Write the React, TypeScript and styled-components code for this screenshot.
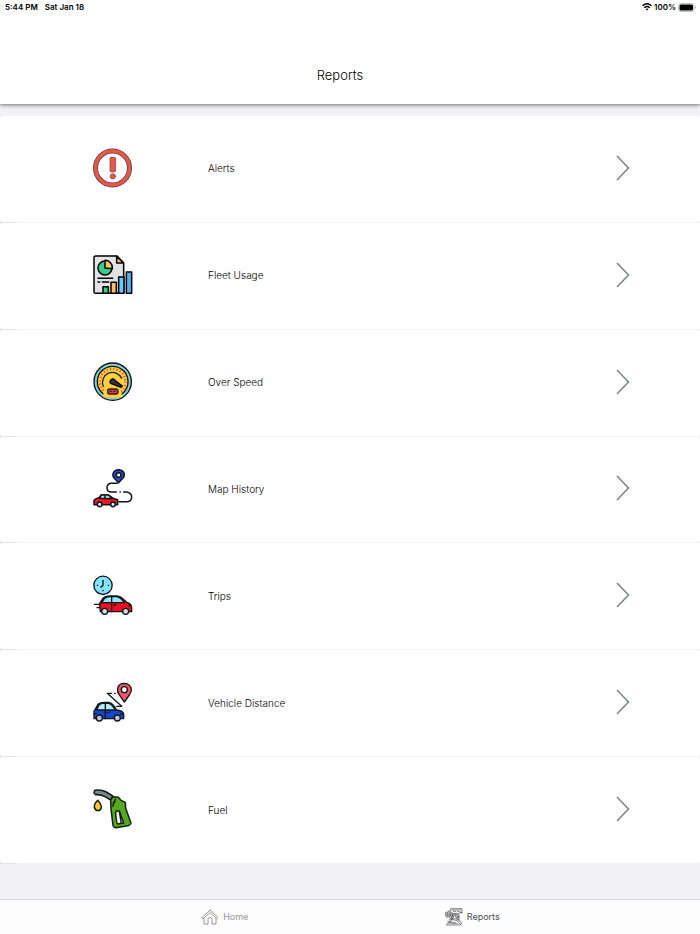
import React from "react";
import styled, { createGlobalStyle } from "styled-components";

const GlobalStyle = createGlobalStyle`
  * { box-sizing: border-box; }
  body {
    margin: 0;
    background: #f1f1f6;
    color: #000;
    font-family: Inter, "Liberation Sans", sans-serif;
  }
`;

const Page = styled.div`
  display: flex;
  flex-direction: column;
  min-height: 100vh;
`;

const Header = styled.header`
  background: #fff;
  box-shadow: 0 1px 4px rgba(0, 0, 0, 0.55);
  padding-bottom: 20px;
`;

const StatusBar = styled.div`
  display: flex;
  align-items: center;
  justify-content: space-between;
  height: 14px;
  padding: 0 4px 0 5px;
  color: #000;
  font-size: 8px;
  line-height: 14px;
  font-weight: 600;
`;

const StatusGroup = styled.div<{ $gap: number }>`
  display: flex;
  align-items: center;
  gap: ${(p) => p.$gap}px;
`;

const Title = styled.h1`
  margin: 52px 0 0;
  padding-right: 20px;
  text-align: center;
  font-size: 13px;
  line-height: 18px;
  font-weight: 300;
`;

const ReportList = styled.ul`
  flex: 1;
  display: grid;
  grid-auto-rows: 1fr;
  margin: 12px 0 35px;
  padding: 0;
  list-style: none;
  background: linear-gradient(to right, #e6e6e9 17px, #f3f3f5 17px);
`;

const ReportItem = styled.li`
  display: flex;
  min-height: 72px;
  padding-bottom: 1px;
`;

const ReportButton = styled.button`
  flex: 1;
  display: flex;
  align-items: center;
  border: 0;
  border-radius: 3px;
  background: #fff;
  padding: 0 70px 2px 93px;
  color: inherit;
  font: inherit;
  font-size: 10px;
  line-height: 16px;
  text-align: left;
  cursor: pointer;
`;

const ReportIcon = styled.svg`
  width: 40px;
  height: 40px;
  flex: none;
  stroke-linecap: round;
  stroke-linejoin: round;
`;

const ReportLabel = styled.span`
  flex: 1;
  padding: 1px 0 0 75px;
  font-weight: 300;
`;

const Chevron = styled.svg`
  width: 14px;
  height: 26px;
  flex: none;
`;

const TabBar = styled.nav`
  display: grid;
  grid-template-columns: 1fr 1fr;
  justify-items: center;
  height: 35px;
  padding: 0 104px 0 101px;
  border-top: 1px solid #d9d9de;
  background: #fdfdfd;
`;

const Tab = styled.a<{ $active?: boolean }>`
  display: flex;
  align-items: center;
  gap: 4px;
  color: ${(p) => (p.$active ? "#4c4c50" : "#96969a")};
  font-size: 9px;
  line-height: 12px;
  text-decoration: none;
`;

const TabIcon = styled.svg`
  width: 18px;
  height: 18px;
  fill: none;
  stroke: currentColor;
  stroke-linecap: round;
  stroke-linejoin: round;
`;

const AlertIcon = () => (
  <>
    <circle cx="82.500" cy="84" r="51" fill="#fff" stroke="#5c4543" strokeWidth="15" />
    <circle cx="82.500" cy="84" r="51" fill="none" stroke="#e9544b" strokeWidth="10" />
    <rect x="75" y="52" width="17" height="44" rx="4" fill="#e9544b" stroke="#6b4542" strokeWidth="2" />
    <circle cx="83.500" cy="109" r="8" fill="#e9544b" stroke="#6b4542" strokeWidth="2" />
  </>
);

const UsageIcon = () => (
  <g stroke="#000" strokeWidth="4.500">
    <path d="M32 27H96L116 47V139H32Q27 139 27 134V32Q27 27 32 27Z" fill="#e3e2e5" />
    <path d="M95 28V48H115Z" fill="#ffbd5b" />
    <circle cx="60" cy="63" r="21" fill="#35cf87" />
    <path d="M60 63V40A22 22 0 0 1 82 62V65Z" fill="#ffc463" />
    <path d="M39 94H83M39 105H44M52 105H71" fill="none" />
    <rect x="54" y="119" width="16" height="20" fill="#35cf87" />
    <rect x="78" y="106" width="16" height="33" fill="#ffbd5b" />
    <rect x="101" y="90" width="16" height="49" fill="#65c9fb" />
    <rect x="124" y="75" width="16" height="64" fill="#4eaff2" />
  </g>
);

const SpeedIcon = () => (
  <>
    <circle cx="83" cy="83" r="56" fill="#84cdd2" stroke="#111" strokeWidth="4" />
    <circle cx="83" cy="83" r="46" fill="#ffd044" stroke="#111" strokeWidth="4" />
    <circle
      cx="83" cy="83" r="38" fill="none" stroke="#e63b32" strokeWidth="7"
      strokeLinecap="butt" strokeDasharray="3 7"
    />
    <path d="M53 128L60 101H106L112 128Q83 136 53 128Z" fill="#ffd044" />
    <path d="M55 97A29 29 0 0 1 110 73" fill="none" stroke="#231f20" strokeWidth="4" />
    <path d="M80 76Q86 73 91 80L112 96L108 100L85 91Q75 89 75 83Q75 78 80 76Z" fill="#35353d" stroke="#000" strokeWidth="4" />
    <rect x="68" y="105" width="31" height="15" rx="6" fill="#e7343e" stroke="#231f20" strokeWidth="4" />
    <path d="M76 112H79M87 112H90" stroke="#231f20" strokeWidth="4" />
  </>
);

const MapIcon = () => (
  <g stroke="#10131b" strokeWidth="4.500">
    <path d="M97 70H78Q66 72 66 83Q66 96 79 96H94M116 96H125Q140 99 140 110Q140 125 125 125H102" fill="none" />
    <path d="M105 96H106" />
    <path d="M101 68L90 57Q82 49 84 41Q88 29 101 29Q116 30 118 43Q119 50 110 58Z" fill="#294ed0" />
    <circle cx="101" cy="45" r="7" fill="#fff" />
    <path d="M27 121Q32 114 42 113L49 105H71L84 115L98 119V134H27Z" fill="#ef1721" />
    <path d="M43 115L49 105H70L82 116Z" fill="#a6e9f0" />
    <path d="M60 107V115" />
    <circle cx="44" cy="133" r="7" fill="#dbeaf0" />
    <circle cx="84" cy="133" r="7" fill="#dbeaf0" />
  </g>
);

const TripsIcon = () => (
  <g stroke="#111319" strokeWidth="4">
    <circle cx="54" cy="55" r="27.500" fill="#83e4fa" />
    <path d="M54 40V55L48 61M37 55H38M70 55H71M54 70V71" fill="none" />
    <path d="M44 109L54 94Q60 87 75 87H96Q108 88 117 98L125 106Q139 109 140 122V134H46Z" fill="#ed0e22" />
    <path d="M50 107L58 95Q63 89 75 89H94Q107 91 115 103L118 107Z" fill="#8eebfa" />
    <path d="M80 89V134M28 112H43M36 122H43M133 113V118M87 114H92" />
    <circle cx="59" cy="133" r="9" fill="#d7dbe0" />
    <circle cx="122" cy="133" r="9" fill="#d7dbe0" />
  </g>
);

const DistanceIcon = () => (
  <g stroke="#101720" strokeWidth="4">
    <path d="M89 58H91M80 58H67L110 97H95" fill="none" />
    <path d="M118 84L102 61Q96 52 98 43Q101 28 118 28Q137 29 139 47Q139 54 133 63Z" fill="#f75762" />
    <circle cx="118" cy="47" r="9" fill="#fff" />
    <path d="M27 112L39 91Q45 85 58 85H72Q80 86 88 97L95 108Q112 110 116 119V134H27Z" fill="#1746c7" />
    <path d="M35 108L42 93Q46 88 57 88H70Q80 89 91 108Z" fill="#b5edf5" />
    <path d="M61 88V134M67 115H72M27 119H33M107 120H114" />
    <circle cx="43" cy="132" r="9" fill="#c0c6ce" />
    <circle cx="97" cy="132" r="9" fill="#c0c6ce" />
  </g>
);

const FuelIcon = () => (
  <g stroke="#14200f" strokeWidth="4.500">
    <path d="M29 28Q49 25 64 33L83 45L77 57L60 47Q48 40 32 41L27 36Z" fill="#7b858d" />
    <path d="M38 58Q27 69 28 79Q31 89 39 89Q48 88 49 79Q49 70 38 58Z" fill="#ffc72d" />
    <path d="M77 57L84 47L100 49L108 58L121 64L122 82L138 126Q137 132 129 134L93 140Q86 140 84 133L78 84Z" fill="#55a91f" />
    <path d="M92 94Q94 88 103 91Q106 98 116 126L98 129Q94 127 92 94Z" fill="#fff" />
    <path d="M103 91L109 127M86 63L84 76M91 55L88 65" fill="none" />
  </g>
);

const reports = [
  { label: "Alerts", Icon: AlertIcon },
  { label: "Fleet Usage", Icon: UsageIcon },
  { label: "Over Speed", Icon: SpeedIcon },
  { label: "Map History", Icon: MapIcon },
  { label: "Trips", Icon: TripsIcon },
  { label: "Vehicle Distance", Icon: DistanceIcon },
  { label: "Fuel", Icon: FuelIcon },
];

export default function App() {
  return (
    <Page>
      <GlobalStyle />
      <Header>
        <StatusBar>
          <StatusGroup $gap={7}>
            <span>5:44 PM</span>
            <span>Sat Jan 18</span>
          </StatusGroup>
          <StatusGroup $gap={2}>
            <svg width="10" height="8" viewBox="0 0 20 16" fill="none" stroke="#000" strokeWidth="3" aria-hidden="true">
              <path d="M1 5.500Q10-2.500 19 5.500M4.500 9.500Q10 4.500 15.500 9.500" />
              <path d="M7 12Q10 9.500 13 12L10 15Z" fill="#000" stroke="none" />
            </svg>
            <span>100%</span>
            <svg width="18" height="9" viewBox="0 0 36 18" aria-hidden="true">
              <rect x="1" y="1" width="31" height="16" rx="5" fill="#fff" stroke="#aaa" strokeWidth="1.500" />
              <rect x="3" y="3" width="27" height="12" rx="3" />
              <path d="M34 6Q37 9 34 12Z" fill="#999" />
            </svg>
          </StatusGroup>
        </StatusBar>
        <Title>Reports</Title>
      </Header>

      <ReportList>
        {reports.map(({ label, Icon }) => (
          <ReportItem key={label}>
            <ReportButton type="button">
              <ReportIcon viewBox="24 24 120 120" aria-hidden="true">
                <Icon />
              </ReportIcon>
              <ReportLabel>{label}</ReportLabel>
              <Chevron viewBox="0 0 14 26" fill="none" stroke="#7c8084" strokeWidth="1.500" aria-hidden="true">
                <path d="M1 1L12.500 13L1 25" />
              </Chevron>
            </ReportButton>
          </ReportItem>
        ))}
      </ReportList>

      <TabBar>
        <Tab href="#home">
          <TabIcon viewBox="0 0 36 36" strokeWidth="2" aria-hidden="true">
            <path d="M2 19L18 4L34 19L31 21L18 9L5 21ZM6 21V32H14V23Q14 19 18 19Q22 19 22 23V32H30V21" />
          </TabIcon>
          Home
        </Tab>
        <Tab href="#reports" $active aria-current="page">
          <TabIcon viewBox="0 0 54 54" strokeWidth="2" aria-hidden="true">
            <path d="M17 9V2H51V14H45V3M21 6H40M25 10H32M37 10H41M45 14H51" />
            <path d="M2 20V13H7V20M9 20V9H14V20M16 20V13H21V20M1 21H24M2 24H21M4 27H18" />
            <circle cx="31" cy="27" r="10" />
            <circle cx="31" cy="27" r="6" />
            <path d="M31 20V27L36 31M22 17H42V39M23 20L18 39M39 34L50 45L46 49L35 37" />
            <path d="M8 40H18L15 46H7L4 51H45L49 47M11 43H31M19 47H37M15 31H22M13 35H25" />
          </TabIcon>
          Reports
        </Tab>
      </TabBar>
    </Page>
  );
}
